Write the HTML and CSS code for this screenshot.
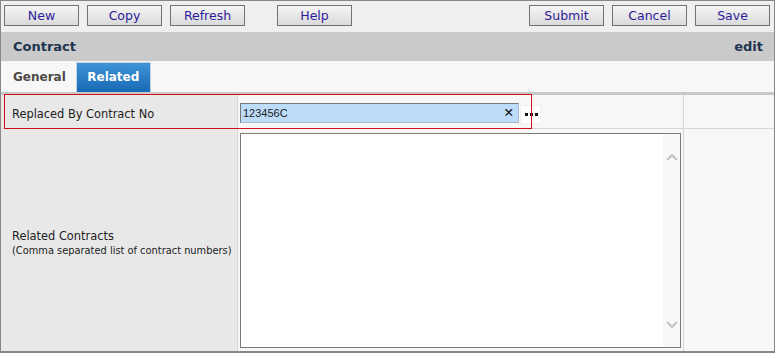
FILE: index.html
```html
<!DOCTYPE html>
<html lang="en">
<head>
  <meta charset="UTF-8">
  <title>Contract - edit</title>
  <link rel="stylesheet" href="styles.css">
</head>
<body>
  <div class="page">
    <div class="toolbar">
      <button class="btn">New</button>
      <button class="btn">Copy</button>
      <button class="btn">Refresh</button>
      <button class="btn help">Help</button>
      <div class="right">
        <button class="btn">Submit</button>
        <button class="btn">Cancel</button>
        <button class="btn">Save</button>
      </div>
    </div>

    <div class="header">
      <span>Contract</span>
      <span>edit</span>
    </div>

    <div class="tabs">
      <div class="tab">General</div>
      <div class="tab active">Related</div>
    </div>
    <div class="band"></div>

    <div class="form">
      <div class="label">Replaced By Contract No</div>
      <div class="field first">
        <div class="input">
          <span class="value">123456C</span>
          <span class="clear">&#x2715;</span>
        </div>
        <div class="more"><span></span><span></span><span></span></div>
      </div>
      <div class="extra"></div>

      <div class="label">
        Related Contracts
        <div class="hint">(Comma separated list of contract numbers)</div>
      </div>
      <div class="field area">
        <div class="textbox">
          <textarea></textarea>
          <div class="scroll">
            <svg width="12" height="8" viewBox="0 0 12 8"><path d="M1 7 L6 2 L11 7" fill="none" stroke="#c4c4c4" stroke-width="2"/></svg>
            <svg width="12" height="8" viewBox="0 0 12 8"><path d="M1 1 L6 6 L11 1" fill="none" stroke="#c4c4c4" stroke-width="2"/></svg>
          </div>
        </div>
      </div>
      <div class="extra"></div>

      <div class="marker"></div>
    </div>
  </div>
</body>
</html>
```

FILE: styles.css
```css
body {
  margin: 0;
  background: #fff;
  font-family: "DejaVu Sans", Verdana, sans-serif;
}
.page {
  width: 773px;
  border: 1px solid #888;
  border-bottom: none;
}
.toolbar {
  height: 31px;
  background: #efefef;
  display: flex;
  align-items: flex-start;
  gap: 8px;
  padding: 4px 4px 0 3px;
  box-sizing: border-box;
}
.toolbar .right {
  margin-left: auto;
  display: flex;
  gap: 8px;
}
.btn {
  width: 75px;
  height: 21px;
  border: 1px solid #727272;
  background: linear-gradient(#f5f5f5, #dadada);
  color: #2b1b9a;
  font-family: "DejaVu Sans", Verdana, sans-serif;
  font-size: 12.5px;
  padding: 0;
  border-radius: 0;
}
.btn.help {
  margin-left: 24px;
}
.header {
  height: 29px;
  background: #c9cac9;
  display: flex;
  justify-content: space-between;
  align-items: center;
  padding: 0 11px 0 12px;
  font-weight: bold;
  font-size: 13px;
  color: #1e3550;
}
.tabs {
  height: 31px;
  background: #f7f7f7;
  display: flex;
  align-items: flex-end;
  padding-left: 2px;
}
.tab {
  height: 29px;
  line-height: 29px;
  padding: 0 10px;
  font-size: 12px;
  font-weight: bold;
  color: #4d4a47;
}
.tab.active {
  width: 73px;
  padding: 0;
  text-align: center;
  color: #fff;
  border: 1px solid #c6d3de;
  border-bottom: none;
  background: linear-gradient(#3f93d6, #176ab4);
}
.band {
  height: 3px;
  background: #c8c8c8;
}
.form {
  position: relative;
  display: grid;
  grid-template-columns: 236px 445px 1fr;
  grid-template-rows: 33px 222px;
  gap: 1px;
  background: #d6d6d6;
  border-bottom: 2px solid #888;
}
.label {
  background: #e8e8e8;
  display: flex;
  flex-direction: column;
  justify-content: center;
  padding: 4px 0 0 11px;
  font-size: 11.4px;
  color: #222;
}
.hint {
  font-size: 9.85px;
  margin-top: 2px;
}
.field {
  background: #f7f7f7;
  display: flex;
  padding-left: 2px;
}
.field.first {
  align-items: center;
  padding-top: 2px;
}
.extra {
  background: #f7f7f7;
}
.input {
  height: 18px;
  width: 271px;
  background: #bcdcfa;
  border: 1px solid #a9b8c6;
  border-top-color: #7a7a7a;
  border-left-color: #7a7a7a;
  display: flex;
  align-items: center;
  justify-content: space-between;
  padding: 0 4px 0 2px;
  font-family: "Liberation Sans", Arial, sans-serif;
  font-size: 11px;
  color: #1d1d1d;
}
.clear {
  font-family: "DejaVu Sans", sans-serif;
  font-size: 12.5px;
  font-weight: bold;
  color: #111;
}
.more {
  width: 18px;
  height: 17px;
  margin: 4px 0 0 1px;
  background: #fff;
  border: 1px solid #f0f0f0;
  display: flex;
  justify-content: center;
  align-items: center;
  gap: 2px;
  padding-left: 1px;
}
.more span {
  width: 3px;
  height: 3px;
  background: #111;
}
.field.area {
  padding: 4px 2px 3px 2px;
}
.textbox {
  flex: 1;
  display: flex;
  border: 1px solid #7a7a7a;
  background: #fff;
}
.textbox textarea {
  flex: 1;
  border: none;
  resize: none;
  outline: none;
  background: #fff;
  margin: 0;
}
.scroll {
  width: 17px;
  background: #f8f8f8;
  display: flex;
  flex-direction: column;
  justify-content: space-between;
  align-items: center;
  padding: 19px 0 18px;
}
.marker {
  position: absolute;
  left: 3px;
  top: -1px;
  width: 526px;
  height: 33px;
  border: 1px solid #d0101b;
}
```
